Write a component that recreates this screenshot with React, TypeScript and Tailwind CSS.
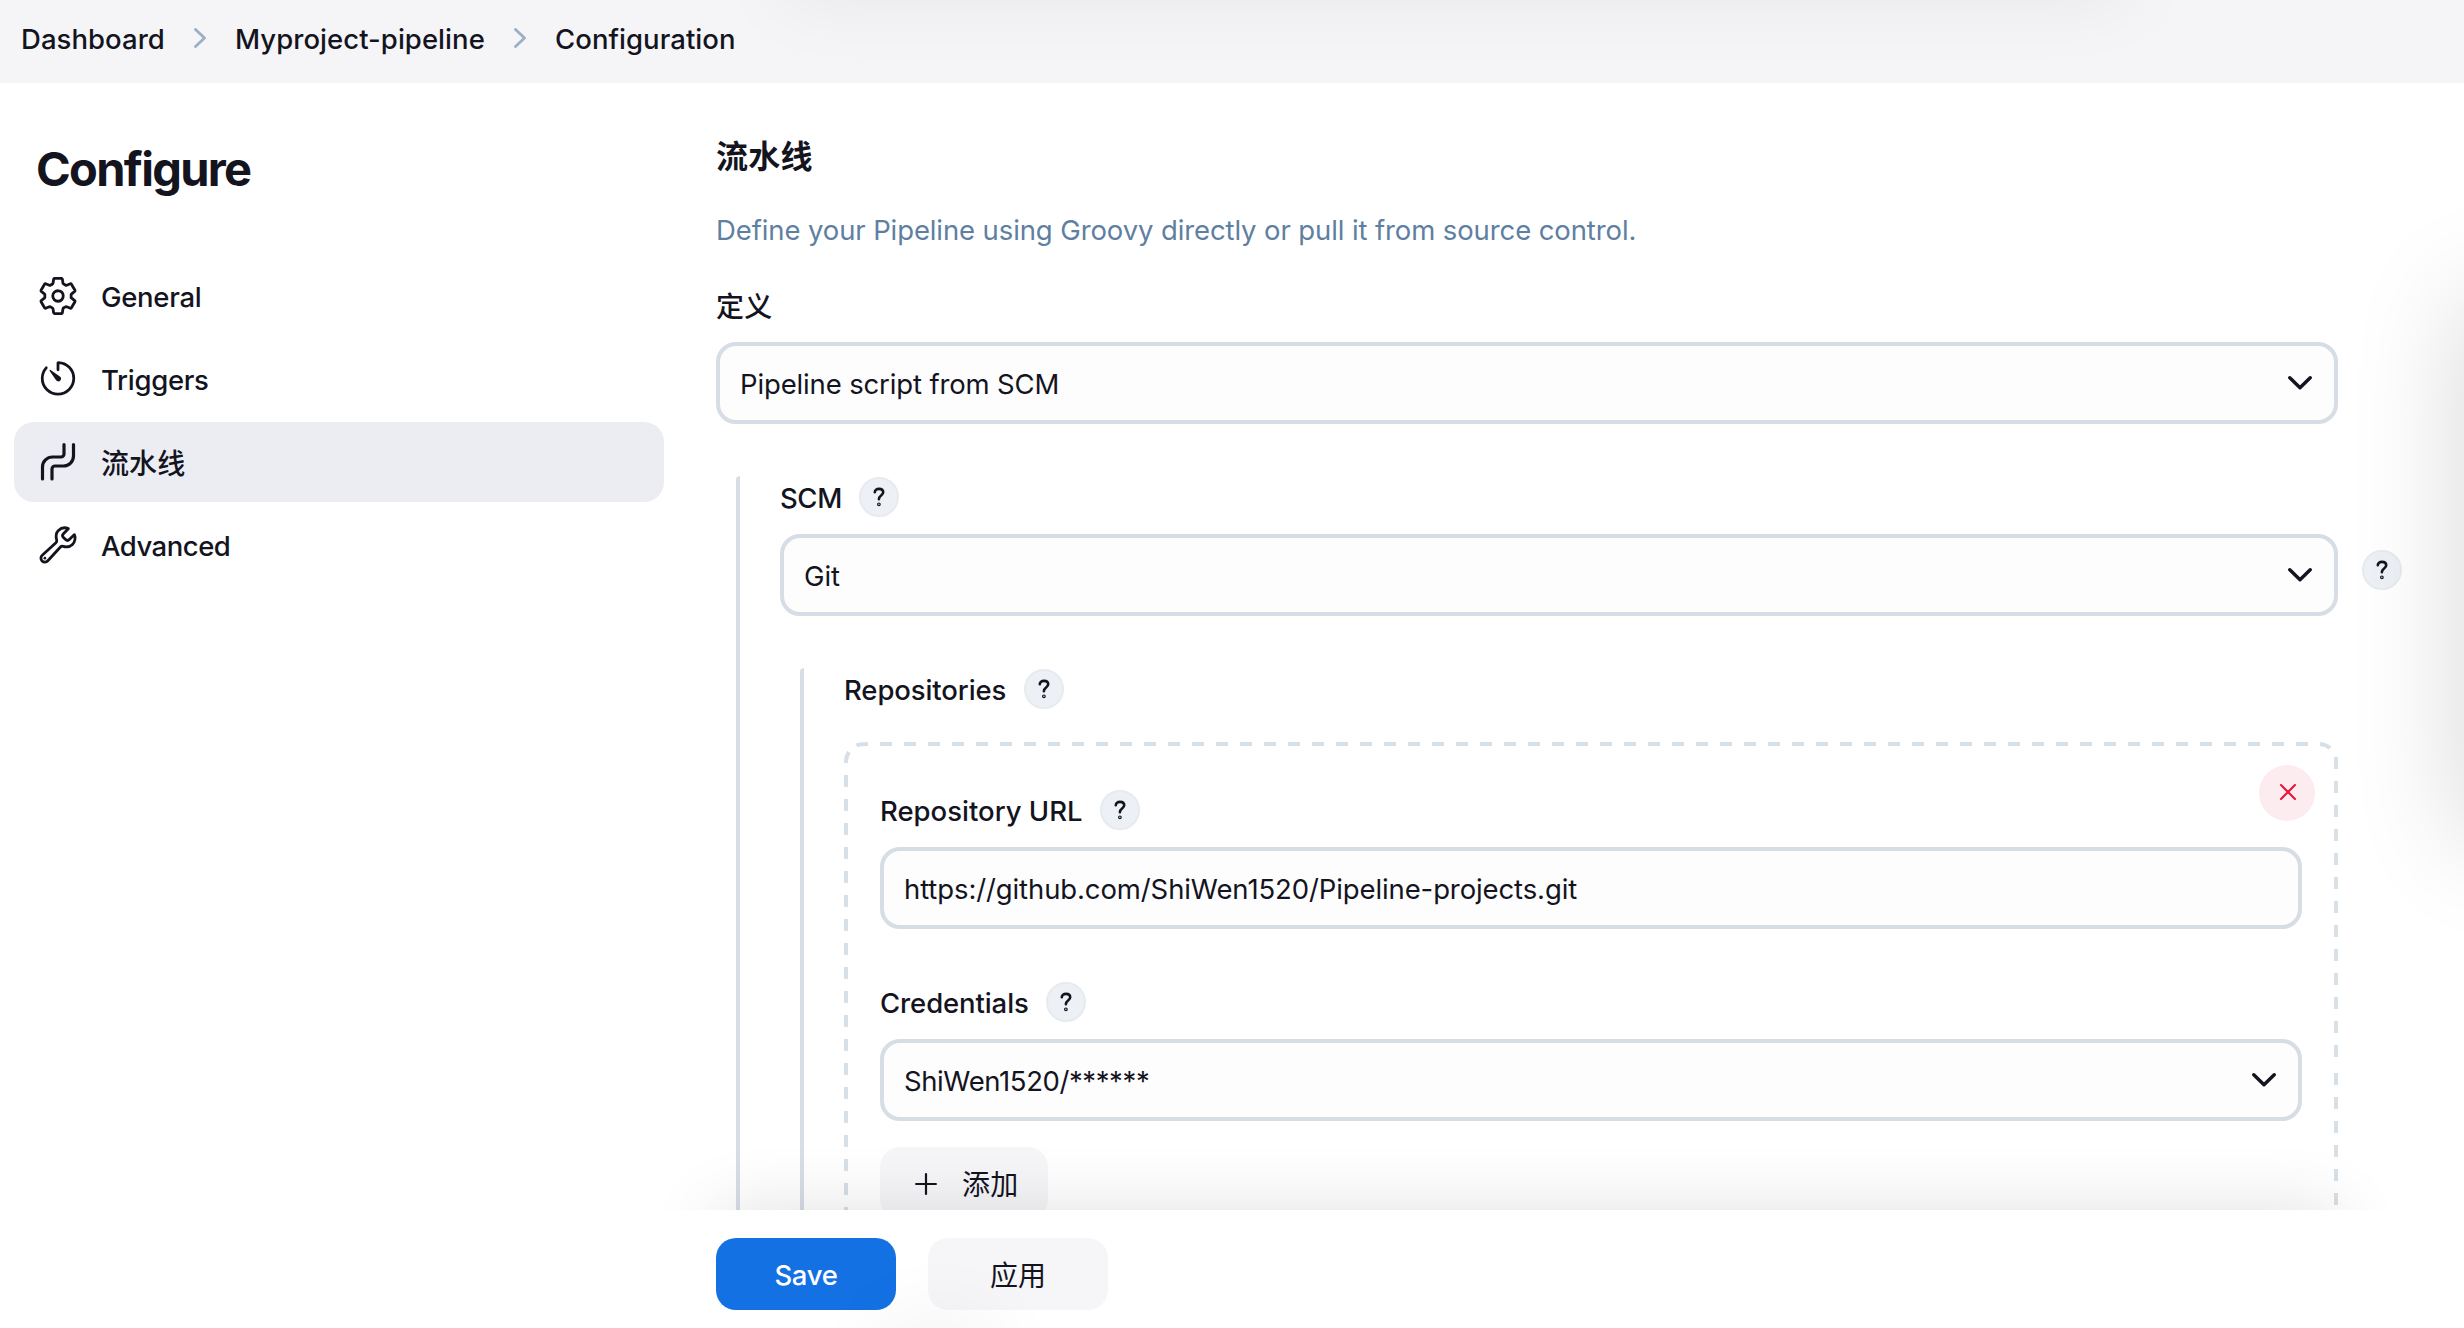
import React from "react";

function Help({ className = "" }: { className?: string }) {
  return (
    <span className={`flex size-10 shrink-0 items-center justify-center rounded-full border-2 border-[#e7ebef] bg-[#edf1f5] ${className}`}>
      <svg viewBox="0 0 12 20" className="h-5 w-3" fill="none" stroke="#14141f" strokeWidth="2.6" strokeLinecap="round" strokeLinejoin="round">
        <path d="M1.8 5.2C1.8 3 3.6 1.9 6 1.9c2.5 0 4.2 1.3 4.2 3.4 0 3.4-4.3 3.2-4.3 6.9" />
        <circle cx="5.9" cy="17.3" r="0.6" />
      </svg>
    </span>
  );
}

function Field({ text, select = true, className = "", textClass = "tracking-[-0.140px]" }: { text: string; select?: boolean; className?: string; textClass?: string }) {
  return (
    <div className={`flex h-[82px] items-center justify-between rounded-[20px] border-4 border-[#d6dde5] bg-[#fdfdfe] pl-5 pr-[22px] ${className}`}>
      <span className={`pt-0.5 ${textClass}`}>{text}</span>
      {select && (
        <svg viewBox="0 0 24 14" className="h-3.5 w-6" fill="none" stroke="#14141f" strokeWidth="3.4" strokeLinecap="round" strokeLinejoin="round">
          <path d="M1.8 1.8 12 11.8l10.200-10" />
        </svg>
      )}
    </div>
  );
}

function Label({ text, width, className = "" }: { text: string; width: string; className?: string }) {
  return (
    <div className={`flex h-10 items-center font-medium ${className}`}>
      <span className={`whitespace-nowrap pt-0.5 ${width}`}>{text}</span>
      <Help />
    </div>
  );
}

function Crumb() {
  return (
    <svg viewBox="0 0 12 20" className="mb-0.5 h-5 w-3" fill="none" stroke="#9bb0c6" strokeWidth="2.8" strokeLinecap="round" strokeLinejoin="round">
      <path d="M1.500 1.400 10.500 10 1.500 18.600" />
    </svg>
  );
}

const icon = "size-[42px] shrink-0";

function GearIcon() {
  return (
    <svg viewBox="0 0 512 512" className={icon} fill="none" stroke="currentColor" strokeWidth="34" strokeLinecap="round" strokeLinejoin="round">
      <path d="M262.290 192.310a64 64 0 1057.400 57.400 64.130 64.130 0 00-57.400-57.400zM416.390 256a154.340 154.340 0 01-1.530 20.790l45.210 35.460a10.810 10.810 0 012.450 13.750l-42.770 74a10.810 10.810 0 01-13.140 4.590l-44.900-18.080a16.110 16.110 0 00-15.170 1.750A164.480 164.480 0 01325 400.800a15.940 15.940 0 00-8.820 12.140l-6.730 47.890a11.080 11.080 0 01-10.680 9.170h-85.540a11.110 11.110 0 01-10.690-8.870l-6.720-47.820a16.070 16.070 0 00-9-12.220 155.300 155.300 0 01-21.460-12.570 16 16 0 00-15.110-1.710l-44.890 18.070a10.810 10.810 0 01-13.140-4.580l-42.770-74a10.800 10.800 0 012.450-13.750l38.210-30a16.050 16.050 0 006-14.080c-.36-4.170-.58-8.330-.58-12.500s.21-8.270.58-12.350a16 16 0 00-6.070-13.940l-38.190-30A10.810 10.810 0 0149.480 186l42.770-74a10.810 10.810 0 0113.140-4.590l44.900 18.080a16.110 16.110 0 0015.170-1.750A164.480 164.480 0 01187 111.200a15.940 15.940 0 008.820-12.140l6.730-47.890A11.080 11.080 0 01213.230 42h85.540a11.110 11.110 0 0110.690 8.870l6.720 47.820a16.070 16.070 0 009 12.220 155.300 155.300 0 0121.460 12.570 16 16 0 0015.110 1.710l44.890-18.070a10.810 10.810 0 0113.140 4.580l42.770 74a10.800 10.800 0 01-2.450 13.750l-38.210 30a16.050 16.050 0 00-6.050 14.080c.33 4.140.55 8.300.55 12.470z" />
    </svg>
  );
}

function TimerIcon() {
  return (
    <svg viewBox="0 8 512 512" className={icon}>
      <path d="M112.910 128A191.850 191.850 0 0064 254c-1.180 106.350 85.650 193.800 192 194 106.200.2 192-85.830 192-192 0-104.540-83.550-189.610-187.500-192a4.360 4.360 0 00-4.500 4.370V152" fill="none" stroke="currentColor" strokeWidth="34" strokeLinecap="round" strokeLinejoin="round" />
      <path d="M233.380 278.630l-79-113a8.130 8.130 0 0111.320-11.320l113 79a32.500 32.500 0 01-37.250 53.260 33.210 33.210 0 01-8.070-7.940z" fill="currentColor" />
    </svg>
  );
}

function PipelineIcon() {
  return (
    <svg viewBox="0 0 42 42" className={icon} fill="none" stroke="currentColor" strokeWidth="3.2" strokeLinecap="round" strokeLinejoin="round">
      <path d="M5.500 38V26a10 10 0 0 1 10-10H24a3 3 0 0 0 3-3V3.500M15 38V28a3 3 0 0 1 3-3h8.500a10 10 0 0 0 10-10V3.500" />
    </svg>
  );
}

function WrenchIcon() {
  return (
    <svg viewBox="0 0 512 512" className={icon}>
      <path d="M393.870 190a32.100 32.100 0 01-45.250 0l-26.570-26.570a32.090 32.090 0 010-45.260L382.190 58a1 1 0 00-.3-1.640c-38.820-16.640-89.150-8.160-121.110 23.570-30.580 30.350-32.320 76-21.120 115.840a31.930 31.930 0 01-9.060 32.080L64 380a48.170 48.170 0 1068 68l153.860-167a31.930 31.930 0 0131.600-9.130c39.540 10.590 84.540 8.600 114.720-21.190 32.490-32 39.500-88.560 23.750-120.930a1 1 0 00-1.600-.26z" fill="none" stroke="currentColor" strokeWidth="34" strokeLinecap="round" strokeMiterlimit="10" />
      <circle cx="96" cy="416" r="16" fill="currentColor" />
    </svg>
  );
}

const items = [
  { label: "General", Icon: GearIcon, text: "pt-0.5 tracking-[-0.300px]" },
  { label: "Triggers", Icon: TimerIcon, text: "pt-0.5 tracking-[-0.300px]" },
  { label: "流水线", Icon: PipelineIcon, text: "pt-1 text-[28px] tracking-[0.100px]", active: true },
  { label: "Advanced", Icon: WrenchIcon, text: "pt-0.5 tracking-[-0.500px]" },
];

export default function App() {
  return (
    <div className="relative flex h-[1328px] w-[2464px] flex-col overflow-hidden bg-white font-[Inter,'Noto_Sans_CJK_SC',sans-serif] text-[27.5px] leading-10 tracking-[-0.1px] text-[#14141f]">
      <header className="flex h-[83px] shrink-0 items-center bg-[#f5f5f8] pb-[5px] pl-[21px] font-medium tracking-[0.050px]">
        <span className="w-[173px]">Dashboard</span>
        <Crumb />
        <span className="ml-[29px] w-[279px]">Myproject-pipeline</span>
        <Crumb />
        <span className="ml-[29px]">Configuration</span>
      </header>

      <div className="flex min-h-0 flex-1">
        <aside className="w-[664px] shrink-0 pl-3.5 pt-14">
          <h1 className="pl-[22px] text-[47px] font-bold leading-[60px] tracking-[-1.700px]">Configure</h1>
          <nav className="mt-[57px] flex flex-col gap-[3px] font-medium">
            {items.map(({ label, Icon, text, active }) => (
              <a key={label} className={`flex h-20 items-center gap-[22px] rounded-[20px] pl-[23px] ${active ? "bg-[#ecedf3]" : ""}`}>
                <Icon />
                <span className={text}>{label}</span>
              </a>
            ))}
          </nav>
        </aside>

        <main className="ml-[52px] flex w-[1700px] min-w-0 flex-col">
          <div className="h-[1127px] shrink-0 overflow-hidden">
            <h2 className="mt-[54px] text-[32px] font-bold leading-10 tracking-[0.200px]">流水线</h2>
            <p className="mt-[33px] tracking-[-0.110px] text-[#5f7fa1]">Define your Pipeline using Groovy directly or pull it from source control.</p>
            <div className="mt-[37px] text-[28px] font-medium tracking-[0.200px]">定义</div>
            <Field text="Pipeline script from SCM" className="mt-[15px] w-[1622px]" />

            <section className="ml-5 mt-[52px] rounded-t-sm border-l-4 border-[#d6dde5] pl-10 pt-px">
              <Label text="SCM" width="w-[79px] tracking-[-0.400px]" />
              <div className="mt-[17px] flex items-start">
                <Field text="Git" className="w-[1558px]" />
                <Help className="ml-6 mt-4" />
              </div>
              <section className="ml-5 mt-[52px] rounded-t-sm border-l-4 border-[#d6dde5] pl-10 pt-px">
                <Label text="Repositories" width="w-[180px]" />
                <div className="relative mt-[33px] h-[500px] w-[1494px] pl-9 pt-12">
                  <svg className="absolute inset-0 h-[500px] w-[1494px]" fill="none" stroke="#d7dfe7" strokeWidth="4">
                    <path d="M12.500 3.400Q15 2 24 2" />
                    <path d="M36 2H1466" strokeDasharray="12 12" />
                    <path d="M1476 2Q1482 2.500 1486 6" />
                    <path d="M1492 15V327" strokeDasharray="12 12" />
                    <path d="M1492 331V500" strokeDasharray="12 12" />
                    <path d="M5 10Q2 14 2 21" />
                    <path d="M2 33V500" strokeDasharray="12 12" />
                  </svg>
                  <button className="absolute left-[1415px] top-[23px] flex size-14 items-center justify-center rounded-full bg-[#fcebef]">
                    <svg viewBox="0 0 16 16" className="mb-0.5 ml-0.5 size-4" fill="none" stroke="#e6123a" strokeWidth="2" strokeLinecap="round">
                      <path d="M1 1l14 14M15 1 1 15" />
                    </svg>
                  </button>
                  <Label text="Repository URL" width="w-[220px] tracking-[0px]" />
                  <Field text="https://github.com/ShiWen1520/Pipeline-projects.git" select={false} className="mt-[17px] w-[1422px]" textClass="tracking-[-0.110px]" />
                  <Label text="Credentials" width="w-[166px]" className="mt-[53px]" />
                  <Field text="ShiWen1520/******" className="mt-[17px] w-[1422px]" textClass="tracking-[-0.400px]" />
                  <button className="mt-[26px] flex h-[72px] w-[168px] items-center rounded-[20px] bg-[#f6f6f9] pl-[35px]">
                    <svg viewBox="0 0 22 22" className="mt-0.5 size-[22px]" fill="none" stroke="#14141f" strokeWidth="2.2" strokeLinecap="round">
                      <path d="M11 1.100v19.800M1.100 11h19.800" />
                    </svg>
                    <span className="ml-[25px] pt-[3px] text-[28px] tracking-[0.200px]">添加</span>
                  </button>
                </div>
              </section>
            </section>
          </div>

          <footer className="relative flex flex-1 items-start gap-8 bg-white pt-7">
            <div className="pointer-events-none absolute -left-[52px] -top-16 h-16 w-[1732px] overflow-hidden">
              <div className="ml-[52px] mt-16 h-[90px] w-[1622px] shadow-[0_0_70px_rgba(0,0,0,0.120)]" />
            </div>
            <button className="h-[72px] w-[180px] rounded-[20px] bg-[#1371e3] pt-0.5 font-medium tracking-[-0.300px] text-white">Save</button>
            <button className="h-[72px] w-[180px] rounded-[20px] bg-[#f6f6f9] pt-[3px] text-[28px] tracking-[0px]">应用</button>
          </footer>
        </main>
      </div>

      <div className="pointer-events-none absolute left-[2464px] top-[300px] h-[540px] w-24 shadow-[0_0_110px_rgba(0,0,0,0.170)]" />
      <div className="pointer-events-none absolute -top-24 left-[780px] h-24 w-[1350px] shadow-[0_0_80px_rgba(0,0,0,0.060)]" />
      <div className="pointer-events-none absolute left-[890px] top-[1340px] h-10 w-24 rounded-full shadow-[0_0_90px_rgba(0,0,0,0.140)]" />
    </div>
  );
}
